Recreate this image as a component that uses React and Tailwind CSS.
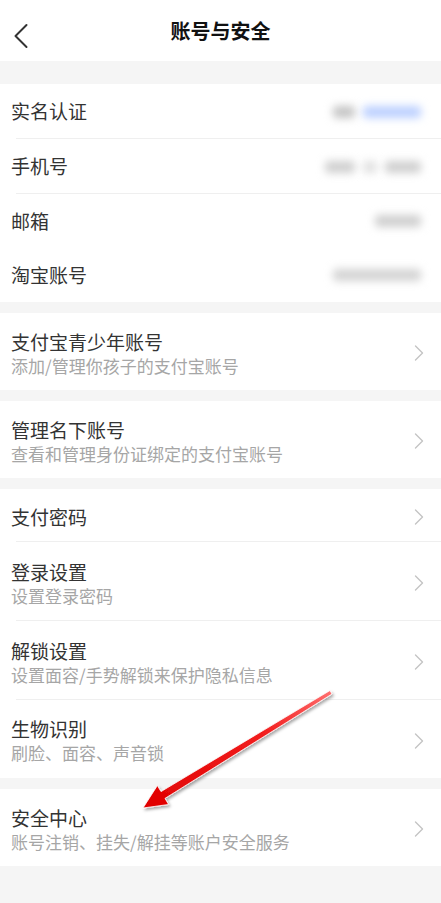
import { ChevronLeft, ChevronRight } from "lucide-react";

const font = { fontFamily: '"Noto Sans CJK SC", "Noto Sans", sans-serif' };

function Chevron() {
  return <ChevronRight className="h-[28px] w-[28px] text-[#c4c4c4]" strokeWidth={1.2} />;
}

function SimpleRow({ title, blur, divider, h = "h-[55px]" }) {
  return (
    <div className={`relative flex ${h} items-center pl-[11px] pr-[20px]`}>
      <span className="text-[19px] text-[#333]">{title}</span>
      <div className="ml-auto flex items-center gap-[8px]">{blur}</div>
      {divider && <div className="absolute bottom-0 left-[16px] right-0 h-px bg-[#efefef]" />}
    </div>
  );
}

function LinkRow({ title, sub, divider, h = "h-[77px]" }) {
  return (
    <div className={`relative flex ${h} items-center pl-[11px] pr-[8px] pt-[3px]`}>
      <div className="flex flex-col">
        <span className="text-[19px] leading-[24px] text-[#333]">{title}</span>
        {sub && <span className="mt-[1px] text-[17px] leading-[22px] text-[#a6a6a6]">{sub}</span>}
      </div>
      <div className="ml-auto">
        <Chevron />
      </div>
      {divider && <div className="absolute bottom-0 left-[16px] right-0 h-px bg-[#efefef]" />}
    </div>
  );
}

const blob = (w, c = "bg-[#cfcfcf]") => <span className={`block h-[12px] ${w} rounded ${c} blur-[4px]`} />;

export default function App() {
  return (
    <div className="relative min-h-[903px] w-[441px] bg-[#f5f5f5]" style={font}>
      <header className="relative flex h-[61px] items-center justify-center bg-white">
        <ChevronLeft className="absolute left-[-1px] top-[14px] h-[44px] w-[44px] text-[#333]" strokeWidth={1.1} />
        <h1 className="text-[20px] font-bold text-[#111]">账号与安全</h1>
      </header>

      <section className="mt-[23px] bg-white">
        <SimpleRow
          title="实名认证"
          divider
          blur={
            <>
              {blob("w-[22px]", "bg-[#c4c4c4]")}
              {blob("w-[58px]", "bg-[#bcd0ff]")}
            </>
          }
        />
        <SimpleRow title="手机号" divider blur={<>{blob("w-[30px]")}{blob("w-[14px]", "bg-[#e0e0e0]")}{blob("w-[36px]")}</>} />
        <SimpleRow title="邮箱" h="h-[54px]" blur={blob("w-[46px]")} />
        <SimpleRow title="淘宝账号" h="h-[54px]" blur={blob("w-[88px]", "bg-[#d3d3d3]")} />
      </section>

      <section className="mt-[11px] bg-white">
        <LinkRow title="支付宝青少年账号" sub="添加/管理你孩子的支付宝账号" />
      </section>

      <section className="mt-[11px] bg-white">
        <LinkRow title="管理名下账号" sub="查看和管理身份证绑定的支付宝账号" />
      </section>

      <section className="mt-[11px] bg-white">
        <LinkRow title="支付密码" divider h="h-[53px]" />
        <LinkRow title="登录设置" sub="设置登录密码" divider h="h-[79px]" />
        <LinkRow title="解锁设置" sub="设置面容/手势解锁来保护隐私信息" divider h="h-[79px]" />
        <LinkRow title="生物识别" sub="刷脸、面容、声音锁" h="h-[78px]" />
      </section>

      <section className="mt-[11px] bg-white">
        <LinkRow title="安全中心" sub="账号注销、挂失/解挂等账户安全服务" />
      </section>

      <svg className="pointer-events-none absolute left-0 top-0" width="441" height="903" viewBox="0 0 441 903">
        <defs>
          <filter id="sh" x="-20%" y="-20%" width="140%" height="140%">
            <feDropShadow dx="1.5" dy="2" stdDeviation="1.8" floodColor="#000" floodOpacity="0.35" />
          </filter>
          <linearGradient id="rg" x1="1" y1="0" x2="0" y2="1">
            <stop offset="0" stopColor="#ff7070" />
            <stop offset="0.35" stopColor="#f22020" />
            <stop offset="1" stopColor="#e00000" />
          </linearGradient>
        </defs>
        <polygon
          filter="url(#sh)"
          fill="url(#rg)"
          stroke="#fff"
          strokeWidth="0.8"
          strokeLinejoin="round"
          points="330,690.5 332,694 165,798.4 168.6,804.5 143,808 157.4,785.5 161,791.6"
        />
      </svg>
    </div>
  );
}
